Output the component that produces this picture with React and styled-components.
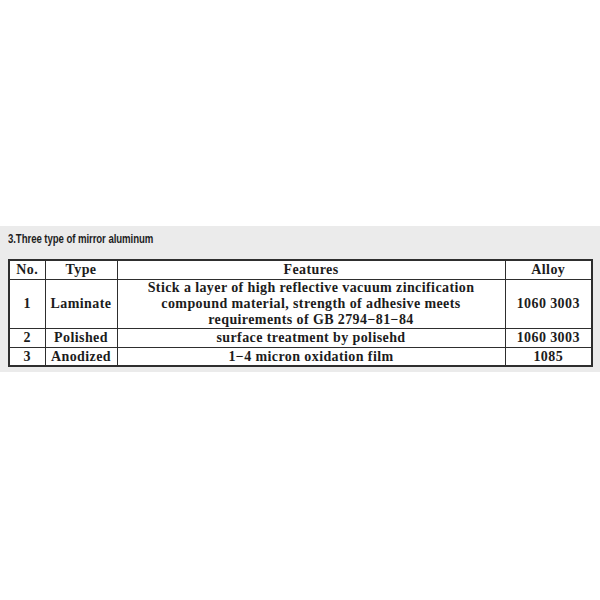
import React from "react";
import styled, { createGlobalStyle } from "styled-components";

const Global = createGlobalStyle`
  html, body { margin: 0; padding: 0; background: #ffffff; }
  body { width: 600px; height: 600px; overflow: hidden; }
`;

const Page = styled.div`
  width: 600px;
  height: 600px;
  padding-top: 226px;
  box-sizing: border-box;
  background: #ffffff;
`;

const Band = styled.section`
  background: #ebebeb;
  height: 146px;
  box-sizing: border-box;
  padding: 6px 9px 0 8px;
  display: flex;
  flex-direction: column;
`;

const Title = styled.h3`
  margin: 0;
  height: 27px;
  flex: none;
  font-family: "Liberation Sans", Arial, sans-serif;
  font-weight: 700;
  font-size: 12.5px;
  line-height: 15px;
  letter-spacing: -0.1px;
  color: #1e1e1e;
`;

const TitleText = styled.span`
  display: inline-block;
  white-space: nowrap;
  transform: scaleX(0.77);
  transform-origin: left center;
`;

const Table = styled.table`
  border-collapse: collapse;
  width: 583px;
  background: #ffffff;
  border: 2px solid #2e2e2e;
  font-family: "Liberation Serif", "Times New Roman", serif;
  font-weight: 700;
  font-size: 14px;
  color: #1c1c1c;
  letter-spacing: 0.4px;
  table-layout: fixed;
`;

const Cell = styled.td`
  border: 1.5px solid #2e2e2e;
  text-align: center;
  vertical-align: middle;
  padding: 0 4px;
  height: ${(p) => p.$h}px;
  line-height: 16px;
`;

const Head = styled(Cell).attrs({ as: "th" })`
  font-weight: 700;
`;

const rows = [
  {
    no: "1",
    type: "Laminate",
    features: [
      "Stick a layer of high reflective vacuum zincification",
      "compound material, strength of adhesive meets",
      "requirements of GB 2794−81−84",
    ],
    alloy: "1060 3003",
    h: 48,
  },
  { no: "2", type: "Polished", features: ["surface treatment by polisehd"], alloy: "1060 3003", h: 18 },
  { no: "3", type: "Anodized", features: ["1−4 micron oxidation film"], alloy: "1085", h: 17 },
];

export default function App() {
  return (
    <>
      <Global />
      <Page>
        <Band>
          <Title>
            <TitleText>3.Three type of mirror aluminum</TitleText>
          </Title>
          <Table>
            <colgroup>
              <col style={{ width: 36 }} />
              <col style={{ width: 72 }} />
              <col style={{ width: 388 }} />
              <col style={{ width: 87 }} />
            </colgroup>
            <thead>
              <tr>
                <Head $h={18}>No.</Head>
                <Head $h={18}>Type</Head>
                <Head $h={18}>Features</Head>
                <Head $h={18}>Alloy</Head>
              </tr>
            </thead>
            <tbody>
              {rows.map((r) => (
                <tr key={r.no}>
                  <Cell $h={r.h}>{r.no}</Cell>
                  <Cell $h={r.h}>{r.type}</Cell>
                  <Cell $h={r.h}>
                    {r.features.map((f, i) => (
                      <React.Fragment key={i}>
                        {i > 0 && <br />}
                        {f}
                      </React.Fragment>
                    ))}
                  </Cell>
                  <Cell $h={r.h}>{r.alloy}</Cell>
                </tr>
              ))}
            </tbody>
          </Table>
        </Band>
      </Page>
    </>
  );
}
